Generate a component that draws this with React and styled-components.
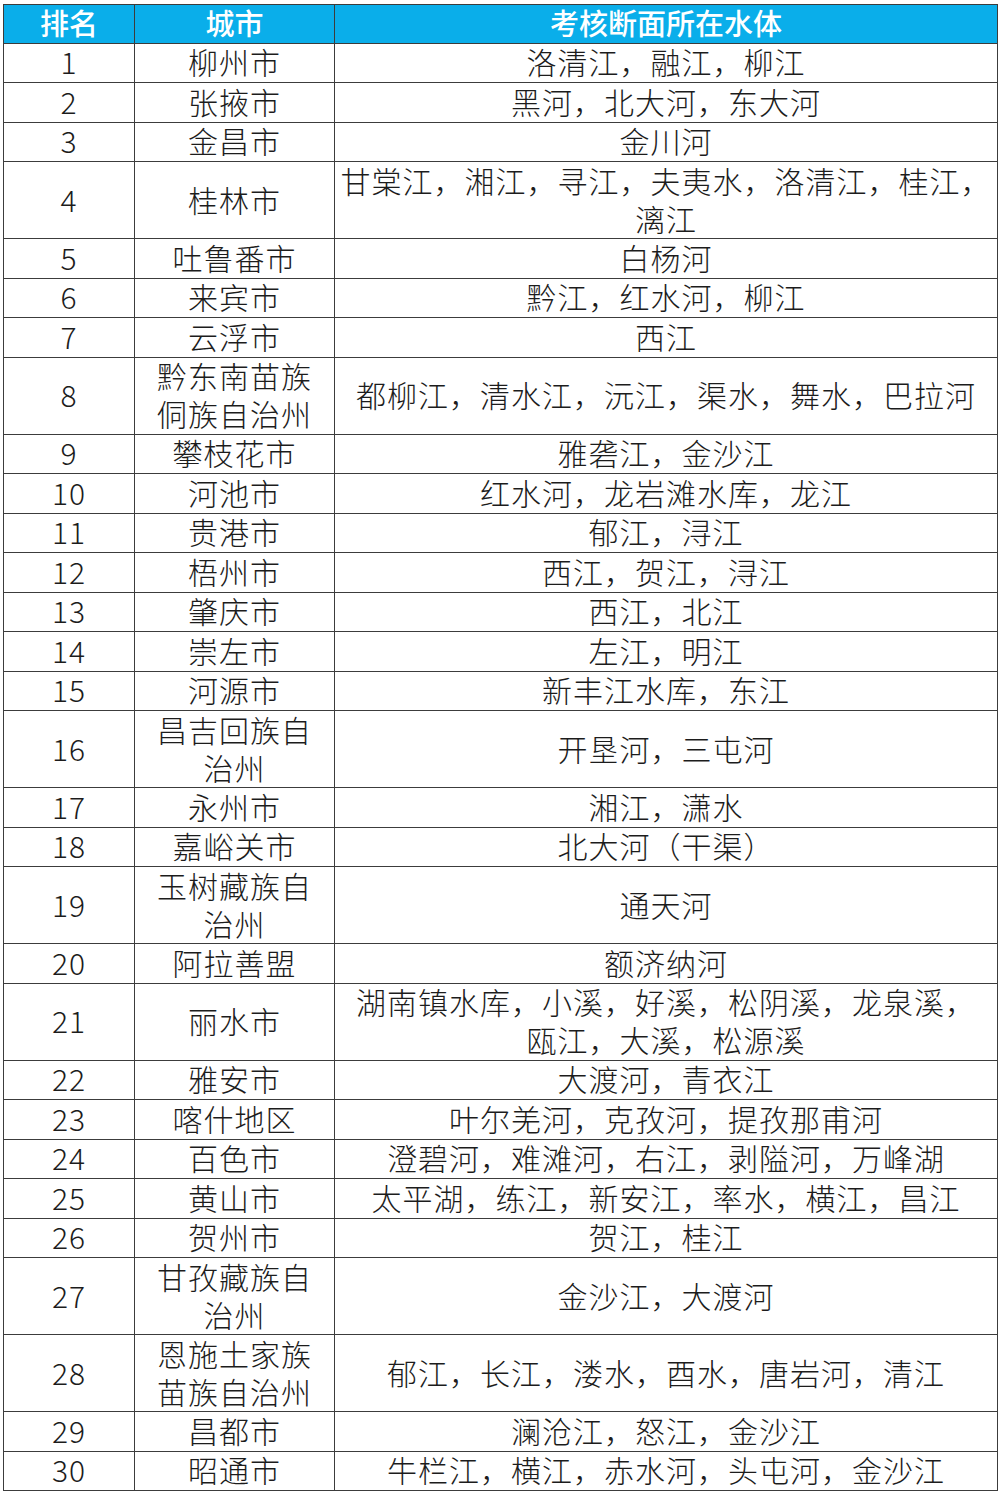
import * as React from "react";
import styled, { createGlobalStyle } from "styled-components";

const GlobalStyle = createGlobalStyle`
  html, body {
    margin: 0;
    padding: 0;
    background: #ffffff;
  }
  body {
    font-family: "Noto Sans CJK SC", "Noto Sans", sans-serif;
  }
`;

const Page = styled.div`
  padding: 4px 3px 8px 3px;
  background: #ffffff;
`;

const Table = styled.table`
  width: 995px;
  border-collapse: collapse;
  table-layout: fixed;
  border: 1px solid #3c3c3c;
  color: #1c1c1c;
  font-family: "Noto Sans CJK SC", "Noto Sans", sans-serif;
  font-weight: 300;
  font-size: 30px;
  letter-spacing: 1px;
`;

const Th = styled.th`
  background: #0aaeea;
  color: #ffffff;
  font-weight: 500;
  font-size: 29px;
  letter-spacing: 0;
  padding: 0;
  border: 1px solid #3c3c3c;
  border-top: none;
`;

const Td = styled.td`
  padding: 0;
  border: 1px solid #3c3c3c;
`;

const Cell = styled.div`
  box-sizing: border-box;
  height: ${(p) => (p.$lines === 2 ? 76 : 38.5)}px;
  padding-bottom: 3px;
  display: flex;
  flex-direction: column;
  align-items: center;
  justify-content: center;
  text-align: center;
  white-space: nowrap;
`;

const HeadCell = styled(Cell)`
  height: 37.5px;
`;

const Line = styled.span`
  display: block;
  line-height: 38px;
  height: 38px;
`;

const rows = [
  ["1", "柳州市", "洛清江，融江，柳江"],
  ["2", "张掖市", "黑河，北大河，东大河"],
  ["3", "金昌市", "金川河"],
  ["4", "桂林市", ["甘棠江，湘江，寻江，夫夷水，洛清江，桂江，", "漓江"]],
  ["5", "吐鲁番市", "白杨河"],
  ["6", "来宾市", "黔江，红水河，柳江"],
  ["7", "云浮市", "西江"],
  ["8", ["黔东南苗族", "侗族自治州"], "都柳江，清水江，沅江，渠水，舞水，巴拉河"],
  ["9", "攀枝花市", "雅砻江，金沙江"],
  ["10", "河池市", "红水河，龙岩滩水库，龙江"],
  ["11", "贵港市", "郁江，浔江"],
  ["12", "梧州市", "西江，贺江，浔江"],
  ["13", "肇庆市", "西江，北江"],
  ["14", "崇左市", "左江，明江"],
  ["15", "河源市", "新丰江水库，东江"],
  ["16", ["昌吉回族自", "治州"], "开垦河，三屯河"],
  ["17", "永州市", "湘江，潇水"],
  ["18", "嘉峪关市", "北大河（干渠）"],
  ["19", ["玉树藏族自", "治州"], "通天河"],
  ["20", "阿拉善盟", "额济纳河"],
  ["21", "丽水市", ["湖南镇水库，小溪，好溪，松阴溪，龙泉溪，", "瓯江，大溪，松源溪"]],
  ["22", "雅安市", "大渡河，青衣江"],
  ["23", "喀什地区", "叶尔羌河，克孜河，提孜那甫河"],
  ["24", "百色市", "澄碧河，难滩河，右江，剥隘河，万峰湖"],
  ["25", "黄山市", "太平湖，练江，新安江，率水，横江，昌江"],
  ["26", "贺州市", "贺江，桂江"],
  ["27", ["甘孜藏族自", "治州"], "金沙江，大渡河"],
  ["28", ["恩施土家族", "苗族自治州"], "郁江，长江，溇水，酉水，唐岩河，清江"],
  ["29", "昌都市", "澜沧江，怒江，金沙江"],
  ["30", "昭通市", "牛栏江，横江，赤水河，头屯河，金沙江"],
];

const toLines = (v) => (Array.isArray(v) ? v : [v]);

function Content({ value, lines }) {
  return (
    <Cell $lines={lines}>
      {toLines(value).map((line, i) => (
        <Line key={i}>{line}</Line>
      ))}
    </Cell>
  );
}

export default function App() {
  return (
    <Page>
      <GlobalStyle />
      <Table>
        <colgroup>
          <col style={{ width: "131px" }} />
          <col style={{ width: "200px" }} />
          <col />
        </colgroup>
        <thead>
          <tr>
            <Th>
              <HeadCell>排名</HeadCell>
            </Th>
            <Th>
              <HeadCell>城市</HeadCell>
            </Th>
            <Th>
              <HeadCell>考核断面所在水体</HeadCell>
            </Th>
          </tr>
        </thead>
        <tbody>
          {rows.map(([rank, city, water]) => {
            const lines = Math.max(toLines(city).length, toLines(water).length);
            return (
              <tr key={rank}>
                <Td>
                  <Content value={rank} lines={lines} />
                </Td>
                <Td>
                  <Content value={city} lines={lines} />
                </Td>
                <Td>
                  <Content value={water} lines={lines} />
                </Td>
              </tr>
            );
          })}
        </tbody>
      </Table>
    </Page>
  );
}
